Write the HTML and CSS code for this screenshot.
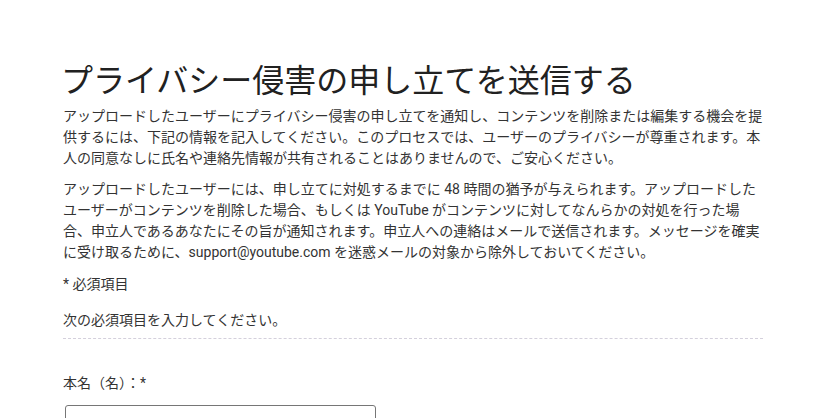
FILE: index.html
```html
<!DOCTYPE html>
<html lang="ja">
<head>
  <meta charset="UTF-8">
  <title>プライバシー侵害の申し立てを送信する</title>
  <link rel="stylesheet" href="styles.css">
</head>
<body>
  <div class="page">
    <!-- 見出しと説明 -->
    <h1 class="title">プライバシー侵害の申し立てを送信する</h1>
    <p class="intro">アップロードしたユーザーにプライバシー侵害の申し立てを通知し、コンテンツを削除または編集する機会を提供するには、下記の情報を記入してください。このプロセスでは、ユーザーのプライバシーが尊重されます。本人の同意なしに氏名や連絡先情報が共有されることはありませんので、ご安心ください。</p>
    <p class="intro">アップロードしたユーザーには、申し立てに対処するまでに 48 時間の猶予が与えられます。アップロードしたユーザーがコンテンツを削除した場合、もしくは YouTube がコンテンツに対してなんらかの対処を行った場合、申立人であるあなたにその旨が通知されます。申立人への連絡はメールで送信されます。メッセージを確実に受け取るために、support@youtube.com を迷惑メールの対象から除外しておいてください。</p>
    <p class="note">* 必須項目</p>
    <p class="notice">次の必須項目を入力してください。</p>

    <!-- フォーム -->
    <form class="form">
      <div class="field">
        <label for="first-name">本名（名）：*</label>
        <input type="text" id="first-name" class="text-input">
      </div>
    </form>
  </div>
</body>
</html>
```

FILE: styles.css
```css
/* レイアウト */
body {
  margin: 0;
  background: #fff;
  color: #333;
  font-family: Roboto, "Noto Sans CJK JP", sans-serif;
}
.page {
  width: 700px;
  padding: 61px 0 0 63px;
}

/* 見出し */
.title {
  margin: 0 0 5px -2px;
  font-size: 32px;
  font-weight: 400;
  line-height: 40px;
  color: #212121;
}

/* 本文 */
.intro {
  margin: 0 0 10px;
  font-size: 14px;
  line-height: 21px;
}
.note {
  margin: 11px 0 0;
  font-size: 14px;
  line-height: 21px;
}
.notice {
  margin: 15px 0 0;
  padding-bottom: 7px;
  border-bottom: 1px dashed #d4d0dc;
  font-size: 14px;
  line-height: 21px;
}

/* フォーム */
.form { margin-top: 34px; }
.field label {
  display: block;
  font-size: 14px;
  line-height: 21px;
  margin-bottom: 11px;
}
.text-input {
  width: 311px;
  height: 32px;
  box-sizing: border-box;
  border: 1px solid #767676;
  border-radius: 3px;
  margin-left: 2px;
}
```
